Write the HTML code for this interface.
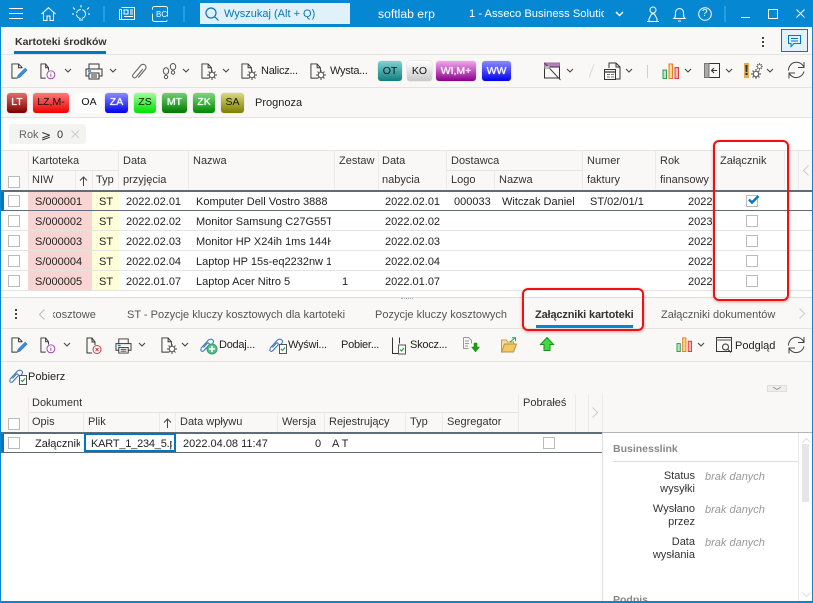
<!DOCTYPE html>
<html lang="pl"><head><meta charset="utf-8"><title>Kartoteki środków</title>
<style>
html,body{margin:0;padding:0}
body{width:813px;height:603px;overflow:hidden;position:relative;background:#fff;font-family:"Liberation Sans",sans-serif;font-size:11px;color:#222}
.a,.t,.b,svg.i{position:absolute}
.t{white-space:nowrap;line-height:14px}
.h{color:#333}
.w{color:#fff}
.e{letter-spacing:-.25px}
.b{height:20px;border-radius:3px;text-align:center;line-height:19px;font-size:10.500px;box-sizing:border-box;box-shadow:0 0 1px rgba(0,0,0,.3)}
.g{text-shadow:0 0 1px #fff}
.cb{position:absolute;width:10px;height:10px;border:1px solid #bbb;background:#fff}
.l{position:absolute;background:#e3e3e1}
.v{position:absolute;width:1px;background:#ebebe9}
svg.i{overflow:visible;fill:none;stroke:#333;stroke-width:1}
.c{overflow:hidden}
</style></head><body>
<svg width="0" height="0" style="position:absolute"><defs>
<symbol id="doc" viewBox="0 0 18 18" overflow="visible"><path d="M11 12V5L7.500 1H1v15h8M7.500 1v4H11" fill="none" stroke="#333"/></symbol>
<symbol id="chev" viewBox="0 0 8 5" overflow="visible"><path d="M1 1l3 3 3-3" fill="none" stroke="#444" stroke-width="1.100"/></symbol>
<symbol id="gear" viewBox="0 0 10 10" overflow="visible"><circle cx="5" cy="5" r="2.700" fill="#fff" stroke="#666" stroke-width="1.200"/><path d="M5 0v2M5 8v2M0 5h2M8 5h2M1.500 1.500l1.300 1.300M7.200 7.200l1.300 1.300M1.500 8.500l1.300-1.300M7.200 2.800l1.300-1.300" stroke="#666" stroke-width="1.200"/></symbol>
<symbol id="print" viewBox="0 0 18 17" overflow="visible"><path d="M4 6V1h10v5M4 13H1V6h16v7h-3M4 10h10v6H4z" fill="#f9f8f6" stroke="#333"/><path d="M3 8h3" stroke="#0288d1" stroke-width="1.500"/><path d="M6 12h6M6 14h6" stroke="#333"/></symbol>
<symbol id="ref" viewBox="0 0 18 18" overflow="visible"><path d="M.5 8.500A8 8 0 0 1 16 5.500M16 0v5.500h-6M16 9.500A8 8 0 0 1 1 11M1 16.500V11h6" fill="none" stroke="#444"/></symbol>
<symbol id="bars" viewBox="0 0 18 16" overflow="visible"><rect x="1" y="7" width="3.500" height="8.500" fill="#bfe3c6" stroke="#2a9d4a"/><rect x="7" y="1" width="3.500" height="14.500" fill="#fbd98f" stroke="#e8782a"/><rect x="13" y="4.500" width="3.500" height="11" fill="#f8b9b9" stroke="#e03a3a"/></symbol>
<symbol id="clipok" viewBox="0 0 20 18" overflow="visible"><path d="M.8 11.500L8 3.500c2.500-2.800 7-.5 5 2.500l-1 1.200M3.500 14c-2 1-3.500-.5-2.200-2M3.500 14l5.500-6c1.200-1.400-.8-2.800-2-1.500L3.500 10.500" fill="none" stroke="#3272b5" stroke-width="1"/><rect x="10.500" y="7.500" width="7" height="9" fill="#fff" stroke="#555"/><path d="M12 12l1.500 1.500 2.500-3" fill="none" stroke="#27a04a" stroke-width="1.200"/></symbol>
<symbol id="edit" viewBox="0 0 18 18" overflow="visible"><path d="M12 5L8 1H1v15h6M8 1v4h4" fill="none" stroke="#333"/><path d="M6.500 16l1-3 7.500-7.500 2 2-7.500 7.500z" fill="#3f8fd8" stroke="#2a78c0" stroke-width=".7"/></symbol>
<symbol id="info" viewBox="0 0 18 18" overflow="visible"><path d="M9 8V5L6 1H1v15h5M6 1v4h3" fill="none" stroke="#333"/><circle cx="11.500" cy="12.500" r="4.200" fill="#fff" stroke="#a83ab0"/><path d="M11.500 10v.8M11.500 11.500v3.200" stroke="#a83ab0"/></symbol>
</defs></svg>

<!-- window frame -->
<div class="a" style="left:0;top:0;width:813px;height:27px;background:#0588d1"></div>
<div class="a" style="left:0;top:27px;width:813px;height:91px;background:#f9f8f6"></div>
<div class="a" style="left:0;top:0;width:1px;height:603px;background:#0588d1;z-index:9"></div>
<div class="a" style="left:812px;top:0;width:1px;height:603px;background:#0588d1;z-index:9"></div>
<div class="a" style="left:0;top:601px;width:813px;height:2px;background:#0588d1;z-index:9"></div>

<!-- title bar -->
<svg class="i" style="left:9px;top:8px;stroke:#fff" width="15" height="11"><path d="M0 .5h14M0 5.500h14M0 10.500h14"/></svg>
<svg class="i" style="left:41px;top:7px;stroke:#fff" width="15" height="14"><path d="M.5 7L7.500.7 14.500 7M2.500 5.500v8h3.500V9h3v4.500h3.500v-8"/></svg>
<svg class="i" style="left:72px;top:5px;stroke:#fff" width="18" height="16"><circle cx="9" cy="9" r="4.500" stroke-dasharray="6 1.500"/><path d="M9 0v2.500M1 2.500l2 2M17 2.500l-2 2M0 9h2M16 9h2M7 15h4"/></svg>
<div class="a" style="left:103px;top:6px;width:2px;height:16px;background:#2a9bdb"></div>
<svg class="i" style="left:119px;top:7px;stroke:#fff" width="16" height="13"><path d="M.5 2.500h2v10M2.500.5h13v12H.5v-10M5 3h4v4H5zM11 3h3M11 5h3M11 7h3M5 9.500h9"/></svg>
<svg class="i" style="left:152px;top:6px;stroke:#fff" width="16" height="16"><rect x=".5" y=".5" width="15" height="15" rx="2" stroke-dasharray="22 4"/></svg>
<div class="t w" style="left:156px;top:9px;font-size:8px;line-height:12px">BC</div>
<div class="a" style="left:183px;top:6px;width:2px;height:16px;background:#2a9bdb"></div>
<div class="a" style="left:200px;top:3px;width:150px;height:21px;background:#e1f1fa"></div>
<svg class="i" style="left:205px;top:7px;stroke:#0277bd;stroke-width:1.200" width="14" height="14"><circle cx="6" cy="6" r="5"/><path d="M10 10l3.500 3.500"/></svg>
<div class="t" style="left:224px;top:7px;color:#0277bd;font-size:11px">Wyszukaj (Alt + Q)</div>
<div class="t w" style="left:378px;top:7px;font-size:12.200px">softlab erp</div>
<div class="t c w" style="left:469px;top:7px;width:135px;font-size:11.200px">1 - Asseco Business Solutions</div>
<svg class="i" style="left:615px;top:11px;stroke:#fff;stroke-width:1.500" width="9" height="6"><path d="M1 1l3.500 3.500L8 1"/></svg>
<svg class="i" style="left:646px;top:6px;stroke:#fff" width="14" height="16"><circle cx="7" cy="4" r="3"/><path d="M3 15.500V13l2.500-5h3L11 13v2.500z M1 15.500h12"/></svg>
<svg class="i" style="left:672px;top:6px;stroke:#fff" width="15" height="16"><path d="M2 12.500c1.500-1 1.500-3 1.500-6a4 4 0 0 1 8 0c0 3 0 5 1.500 6zM6 15h3"/></svg>
<svg class="i" style="left:698px;top:7px;stroke:#fff" width="14" height="14"><circle cx="7" cy="7" r="6.300"/></svg>
<div class="t w" style="left:702px;top:7px;font-size:10px">?</div>
<div class="a" style="left:724px;top:6px;width:2px;height:16px;background:#2a9bdb"></div>
<div class="a" style="left:741px;top:17px;width:9px;height:1px;background:#fff"></div>
<div class="a" style="left:768px;top:9px;width:8px;height:8px;border:1px solid #fff"></div>
<svg class="i" style="left:796px;top:9px;stroke:#fff" width="10" height="10"><path d="M.5.500l8 8M8.500.500l-8 8"/></svg>

<!-- tab row -->
<div class="t" style="left:15px;top:35px;font-weight:bold;font-size:10.500px;color:#333">Kartoteki środków</div>
<div class="a" style="left:14px;top:51px;width:92px;height:3px;background:#0277bd"></div>
<div class="l" style="left:1px;top:54px;width:811px;height:1px"></div>
<div class="a" style="left:762px;top:37px;width:2px;height:2px;background:#444;box-shadow:0 4px #444,0 8px #444"></div>
<div class="a" style="left:781px;top:29px;width:25px;height:21px;background:#e3f1fa;border:1px solid #0277bd"></div>
<svg class="i" style="left:788px;top:35px;stroke:#0277bd" width="13" height="13"><path d="M.5.500h12v8H6l-3 3v-3H.5zM3 3.500h7M3 6h7"/></svg>

<!-- toolbar 1 -->
<svg class="i" style="left:11px;top:63px" width="17" height="17"><use href="#edit"/></svg>
<svg class="i" style="left:40px;top:63px" width="17" height="17"><use href="#info"/></svg>
<svg class="i" style="left:64px;top:68px" width="8" height="5"><use href="#chev"/></svg>
<svg class="i" style="left:85px;top:63px" width="18" height="17"><use href="#print"/></svg>
<svg class="i" style="left:109px;top:68px" width="8" height="5"><use href="#chev"/></svg>
<svg class="i" style="left:132px;top:63px;stroke:#666;stroke-width:1.100" width="15" height="17"><path transform="rotate(40 7.500 8.500)" d="M10.500 14V3a3 3 0 0 0-6 0v12a2 2 0 0 0 4 0V4.500"/></svg>
<svg class="i" style="left:162px;top:63px;stroke:#555" width="15" height="16"><ellipse cx="4" cy="8" rx="2.700" ry="3.200"/><circle cx="4" cy="14" r="1.700"/><ellipse cx="11" cy="3.700" rx="2.700" ry="3.200"/><circle cx="11" cy="9.500" r="1.700"/></svg>
<svg class="i" style="left:182px;top:68px" width="8" height="5"><use href="#chev"/></svg>
<svg class="i" style="left:201px;top:63px" width="17" height="17"><use href="#doc"/></svg>
<svg class="i" style="left:207px;top:70px" width="10" height="10"><use href="#gear"/></svg>
<svg class="i" style="left:222px;top:68px" width="8" height="5"><use href="#chev"/></svg>
<svg class="i" style="left:241px;top:63px" width="17" height="17"><use href="#doc"/></svg>
<svg class="i" style="left:247px;top:70px" width="10" height="10"><use href="#gear"/></svg>
<div class="t e" style="left:261px;top:64px">Nalicz...</div>
<svg class="i" style="left:310px;top:63px" width="17" height="17"><use href="#doc"/></svg>
<svg class="i" style="left:316px;top:70px" width="10" height="10"><use href="#gear"/></svg>
<div class="t e" style="left:330px;top:64px">Wysta...</div>
<div class="b" style="left:378px;top:61px;width:24px;line-height:20px;background:linear-gradient(#7fd3d3,#0f7f7f);color:#111">OT</div>
<div class="b" style="left:407px;top:61px;width:25px;line-height:20px;background:linear-gradient(#fff,#c8c8c8);color:#111">KO</div>
<div class="b g" style="left:436px;top:61px;width:40px;line-height:20px;background:linear-gradient(#f3a6ef,#8a008a);color:#fff">WI,M+</div>
<div class="b g" style="left:482px;top:61px;width:29px;line-height:20px;background:linear-gradient(#8a8aff,#0000ee);color:#fff">WW</div>
<svg class="i" style="left:544px;top:62px" width="18" height="18"><rect x=".5" y="1" width="15" height="4" fill="#b77fb7" stroke="#a868a8"/><rect x=".5" y="5" width="15" height="11" fill="none" stroke="#333"/><path d="M.5 1l16 17" stroke="#444"/><rect x=".5" y="4" width="5" height="3" fill="#bbb" stroke="none"/></svg>
<svg class="i" style="left:566px;top:68px" width="8" height="5"><use href="#chev"/></svg>
<svg class="i" style="left:587px;top:64px;stroke:#d5d5d5" width="8" height="14"><path d="M7 .5l-5 13"/></svg>
<svg class="i" style="left:604px;top:62px" width="18" height="18"><path d="M5 6V1h7l4 4v12h-4M12 1v4h4" fill="none" stroke="#333"/><rect x=".5" y="7.500" width="11" height="10" fill="#f9f8f6" stroke="#333"/><path d="M1 10h10" stroke="#555" stroke-width="1.500"/><path d="M3 12.500h3M7 12.500h3M3 15h3M7 15h3" stroke="#777"/></svg>
<svg class="i" style="left:625px;top:68px" width="8" height="5"><use href="#chev"/></svg>
<div class="a" style="left:647px;top:65px;width:1px;height:13px;background:#cfcfcf"></div>
<svg class="i" style="left:662px;top:63px" width="18" height="16"><use href="#bars"/></svg>
<svg class="i" style="left:684px;top:68px" width="8" height="5"><use href="#chev"/></svg>
<svg class="i" style="left:704px;top:63px" width="16" height="15"><rect x=".5" y=".5" width="15" height="14" fill="none" stroke="#333"/><rect x=".5" y=".5" width="4.500" height="14" fill="#aaa" stroke="#777"/><path d="M13 7.500H8M10 5L7.500 7.500 10 10" stroke="#333"/></svg>
<svg class="i" style="left:725px;top:68px" width="8" height="5"><use href="#chev"/></svg>
<div class="a" style="left:744px;top:63px;width:5px;height:15px;background:#e2ad55"></div>
<div class="t" style="left:744px;top:62px;font-weight:bold;font-size:15px;line-height:17px;color:#333">!</div>
<svg class="i" style="left:751px;top:69px" width="10" height="10"><use href="#gear"/></svg>
<svg class="i" style="left:756px;top:63px" width="7" height="7"><use href="#gear"/></svg>
<svg class="i" style="left:766px;top:68px" width="8" height="5"><use href="#chev"/></svg>
<svg class="i" style="left:788px;top:62px" width="18" height="18"><use href="#ref"/></svg>
<div class="l" style="left:1px;top:87px;width:811px;height:1px"></div>

<!-- toolbar 2 -->
<div class="b g" style="left:7px;top:93px;width:20px;background:linear-gradient(#ea6a6a,#7a0000);color:#fff">LT</div>
<div class="b" style="left:33px;top:93px;width:36px;background:linear-gradient(#ff7a7a,#f00000);color:#111">LZ,M-</div>
<div class="b" style="left:75px;top:93px;width:28px;background:#fff;color:#111;box-shadow:none">OA</div>
<div class="b g" style="left:105px;top:93px;width:23px;background:linear-gradient(#8a8aff,#0000ee);color:#fff">ZA</div>
<div class="b" style="left:134px;top:93px;width:22px;background:linear-gradient(#9cff9c,#00e000);color:#111">ZS</div>
<div class="b g" style="left:162px;top:93px;width:25px;background:linear-gradient(#74cc74,#007a00);color:#fff">MT</div>
<div class="b g" style="left:193px;top:93px;width:22px;background:linear-gradient(#7ed67e,#008800);color:#fff">ZK</div>
<div class="b" style="left:221px;top:93px;width:23px;background:linear-gradient(#dada7a,#7f7f00);color:#111">SA</div>
<div class="t" style="left:255px;top:96px">Prognoza</div>
<div class="l" style="left:1px;top:117px;width:811px;height:1px"></div>

<!-- filter -->
<div class="a" style="left:9px;top:124px;width:77px;height:20px;background:#f3f3f2;border-radius:3px"></div>
<div class="t" style="left:19px;top:128px;color:#666">Rok</div>
<div class="t" style="left:41px;top:128px;font-size:12px;color:#333">⩾</div>
<div class="t" style="left:57px;top:128px;color:#333">0</div>
<svg class="i" style="left:71px;top:130px;stroke:#ccc" width="9" height="9"><path d="M.5.500l7.500 7.500M8 .5L.5 8"/></svg>

<!-- grid 1 header -->
<div class="a" style="left:1px;top:151px;width:811px;height:39px;background:#f9f8f6"></div>
<div class="l" style="left:1px;top:150px;width:811px;height:1px"></div>
<div class="l" style="left:28px;top:170px;width:91px;height:1px"></div>
<div class="l" style="left:446px;top:170px;width:136px;height:1px"></div>
<div class="v" style="left:28px;top:151px;height:39px"></div>
<div class="v" style="left:75px;top:171px;height:19px"></div>
<div class="v" style="left:92px;top:171px;height:19px"></div>
<div class="v" style="left:118px;top:151px;height:39px"></div>
<div class="v" style="left:188px;top:151px;height:39px"></div>
<div class="v" style="left:334px;top:151px;height:39px"></div>
<div class="v" style="left:378px;top:151px;height:39px"></div>
<div class="v" style="left:446px;top:151px;height:39px"></div>
<div class="v" style="left:494px;top:171px;height:19px"></div>
<div class="v" style="left:582px;top:151px;height:39px"></div>
<div class="v" style="left:655px;top:151px;height:39px"></div>
<div class="v" style="left:714px;top:151px;height:39px"></div>
<div class="v" style="left:784px;top:151px;height:39px"></div>
<div class="v" style="left:798px;top:151px;height:39px"></div>
<div class="cb" style="left:8px;top:176px"></div>
<div class="t h" style="left:32px;top:154px">Kartoteka</div>
<div class="t h" style="left:123px;top:154px">Data</div>
<div class="t h" style="left:193px;top:154px">Nazwa</div>
<div class="t h" style="left:339px;top:154px">Zestaw</div>
<div class="t h" style="left:382px;top:154px">Data</div>
<div class="t h" style="left:451px;top:154px">Dostawca</div>
<div class="t h" style="left:587px;top:154px">Numer</div>
<div class="t h" style="left:660px;top:154px">Rok</div>
<div class="t h" style="left:720px;top:154px">Załącznik</div>
<div class="t h" style="left:32px;top:173px">NIW</div>
<svg class="i" style="left:79px;top:176px;stroke:#444" width="9" height="10"><path d="M4.500 10V1M1 4.500L4.500 1 8 4.500"/></svg>
<div class="t h" style="left:96px;top:173px">Typ</div>
<div class="t h" style="left:123px;top:173px">przyjęcia</div>
<div class="t h" style="left:382px;top:173px">nabycia</div>
<div class="t h" style="left:451px;top:173px">Logo</div>
<div class="t h" style="left:499px;top:173px">Nazwa</div>
<div class="t h" style="left:587px;top:173px">faktury</div>
<div class="t h" style="left:660px;top:173px">finansowy</div>
<svg class="i" style="left:803px;top:165px;stroke:#ccc" width="6" height="11"><path d="M5.500.5L.5 5.500l5 5"/></svg>
<div class="a" style="left:1px;top:190px;width:811px;height:2px;background:#5f6e76"></div>

<!-- grid 1 rows -->
<div class="a" style="left:28px;top:192px;width:64px;height:99px;background:#f8d4d3"></div>
<div class="a" style="left:92px;top:192px;width:27px;height:99px;background:#fefed9"></div>
<div class="l" style="left:1px;top:230px;width:811px;height:1px"></div>
<div class="l" style="left:1px;top:250px;width:811px;height:1px"></div>
<div class="l" style="left:1px;top:270px;width:811px;height:1px"></div>
<div class="l" style="left:1px;top:290px;width:811px;height:1px"></div>
<div class="a" style="left:1px;top:210px;width:811px;height:1px;background:#5f6e76"></div>
<div class="a" style="left:1px;top:192px;width:3px;height:19px;background:#0277bd"></div>
<div class="cb" style="left:8px;top:195px"></div><div class="cb" style="left:8px;top:215px"></div><div class="cb" style="left:8px;top:235px"></div><div class="cb" style="left:8px;top:255px"></div><div class="cb" style="left:8px;top:275px"></div>

<div class="t" style="left:35px;top:195px">S/000001</div><div class="t" style="left:99px;top:195px">ST</div><div class="t" style="left:126px;top:195px">2022.02.01</div><div class="t c" style="left:196px;top:195px;width:135px">Komputer Dell Vostro 3888</div><div class="t" style="left:385px;top:195px">2022.02.01</div><div class="t" style="left:454px;top:195px">000033</div><div class="t" style="left:502px;top:195px">Witczak Daniel</div><div class="t" style="left:590px;top:195px">ST/02/01/1</div><div class="t" style="left:688px;top:195px">2022</div>
<div class="t" style="left:35px;top:215px">S/000002</div><div class="t" style="left:99px;top:215px">ST</div><div class="t" style="left:126px;top:215px">2022.02.02</div><div class="t c" style="left:196px;top:215px;width:135px">Monitor Samsung C27G55T</div><div class="t" style="left:385px;top:215px">2022.02.02</div><div class="t" style="left:688px;top:215px">2023</div>
<div class="t" style="left:35px;top:235px">S/000003</div><div class="t" style="left:99px;top:235px">ST</div><div class="t" style="left:126px;top:235px">2022.02.03</div><div class="t c" style="left:196px;top:235px;width:135px">Monitor HP X24ih 1ms 144Hz</div><div class="t" style="left:385px;top:235px">2022.02.03</div><div class="t" style="left:688px;top:235px">2022</div>
<div class="t" style="left:35px;top:255px">S/000004</div><div class="t" style="left:99px;top:255px">ST</div><div class="t" style="left:126px;top:255px">2022.02.04</div><div class="t c" style="left:196px;top:255px;width:135px">Laptop HP 15s-eq2232nw 15</div><div class="t" style="left:385px;top:255px">2022.02.04</div><div class="t" style="left:688px;top:255px">2022</div>
<div class="t" style="left:35px;top:275px">S/000005</div><div class="t" style="left:99px;top:275px">ST</div><div class="t" style="left:126px;top:275px">2022.01.07</div><div class="t c" style="left:196px;top:275px;width:135px">Laptop Acer Nitro 5</div><div class="t" style="left:342px;top:275px">1</div><div class="t" style="left:385px;top:275px">2022.01.07</div><div class="t" style="left:688px;top:275px">2022</div>

<div class="cb" style="left:746px;top:195px"></div><div class="cb" style="left:746px;top:215px"></div><div class="cb" style="left:746px;top:235px"></div><div class="cb" style="left:746px;top:255px"></div><div class="cb" style="left:746px;top:275px"></div>
<svg class="i" style="left:748px;top:195px;stroke:#0277bd;stroke-width:2.400" width="12" height="10"><path d="M1 4.500l3 3 6.500-6.500"/></svg>

<!-- splitter -->
<div class="a" style="left:1px;top:291px;width:811px;height:7px;background:#fff"></div>
<div class="a" style="left:1px;top:297px;width:811px;height:1px;background:#ddd"></div>

<!-- bottom panel bg -->
<div class="a" style="left:1px;top:298px;width:811px;height:135px;background:#f9f8f6"></div>
<div class="a" style="left:401px;top:298px;width:12px;height:1px;border-top:1px dotted #aaa"></div>
<div class="a" style="left:15px;top:309px;width:2px;height:2px;background:#444;box-shadow:0 4px #444,0 8px #444"></div>
<svg class="i" style="left:39px;top:309px;stroke:#bbb" width="6" height="11"><path d="M5.500.5L.5 5.500l5 5"/></svg>
<div class="a c" style="left:53px;top:308px;width:46px;height:14px"><div class="t" style="left:-3px;top:0;color:#555">kosztowe</div></div>
<div class="t" style="left:127px;top:308px;color:#555">ST - Pozycje kluczy kosztowych dla kartoteki</div>
<div class="t" style="left:375px;top:308px;color:#555">Pozycje kluczy kosztowych</div>
<div class="t" style="left:535px;top:308px;font-weight:bold;color:#333;letter-spacing:-.15px">Załączniki kartoteki</div>
<div class="a" style="left:536px;top:325px;width:97px;height:3px;background:#0288d1"></div>
<div class="t" style="left:661px;top:308px;color:#555">Załączniki dokumentów</div>
<svg class="i" style="left:799px;top:308px;stroke:#ccc" width="6" height="11"><path d="M.5.500l5 5-5 5"/></svg>
<div class="l" style="left:1px;top:328px;width:811px;height:1px"></div>

<!-- bottom toolbar -->
<svg class="i" style="left:11px;top:337px" width="17" height="17"><use href="#edit"/></svg>
<svg class="i" style="left:40px;top:337px" width="17" height="17"><use href="#info"/></svg>
<svg class="i" style="left:63px;top:342px" width="8" height="5"><use href="#chev"/></svg>
<svg class="i" style="left:86px;top:337px" width="17" height="17"><path d="M9 8V5L6 1H1v15h5M6 1v4h3" fill="none" stroke="#333"/><circle cx="11" cy="12.500" r="4" fill="#fff" stroke="#d9363e"/><path d="M9.500 11l3 3M12.500 11l-3 3" stroke="#d9363e"/></svg>
<svg class="i" style="left:115px;top:338px" width="17" height="16"><use href="#print"/></svg>
<svg class="i" style="left:138px;top:342px" width="8" height="5"><use href="#chev"/></svg>
<svg class="i" style="left:161px;top:337px" width="17" height="17"><use href="#doc"/></svg>
<svg class="i" style="left:167px;top:344px" width="10" height="10"><use href="#gear"/></svg>
<svg class="i" style="left:181px;top:342px" width="8" height="5"><use href="#chev"/></svg>
<svg class="i" style="left:200px;top:337px" width="19" height="18"><path d="M.8 11.500L8 3.500c2.500-2.800 7-.5 5 2.500l-1 1.200M3.500 14c-2 1-3.500-.5-2.200-2M3.500 14l5.500-6c1.200-1.400-.8-2.800-2-1.500L3.500 10.500" fill="none" stroke="#3272b5"/><circle cx="12" cy="12" r="5" fill="#5cbf8c" stroke="#3a9c6e"/><path d="M12 9v6M9 12h6" stroke="#fff" stroke-width="1.500"/></svg>
<div class="t e" style="left:219px;top:338px">Dodaj...</div>
<svg class="i" style="left:269px;top:337px" width="20" height="18"><use href="#clipok"/></svg>
<div class="t e" style="left:288px;top:338px">Wyświ...</div>
<div class="t e" style="left:341px;top:338px">Pobier...</div>
<svg class="i" style="left:392px;top:337px" width="16" height="18"><path d="M.5.500v16h6M7.500.5v6" fill="none" stroke="#333"/><rect x="6.500" y="8" width="7" height="9" fill="#fff" stroke="#555"/><path d="M8 12.500l1.500 1.500 2.500-3" fill="none" stroke="#27a04a" stroke-width="1.200"/></svg>
<div class="t e" style="left:410px;top:338px">Skocz...</div>
<svg class="i" style="left:463px;top:337px" width="17" height="16"><path d="M.5.500h5l3 3v3M.5.500v11h5M2 4h4M2 6.500h4M2 9h3" fill="none" stroke="#999"/><path d="M11 6h3v4h2.500l-4 5-4-5H11z" fill="#16a016" stroke="#0a8a0a" stroke-width=".5"/></svg>
<svg class="i" style="left:501px;top:337px" width="17" height="17"><path d="M.5 15V3h5l1 2h6v2" fill="#f7dc9a" stroke="#c2a050"/><path d="M.5 15l3-8h12l-3 8z" fill="#f2c766" stroke="#b8923c"/><path d="M9 5l5-4M11 .8h3.500v3.500" fill="none" stroke="#2fa04a"/></svg>
<svg class="i" style="left:540px;top:337px" width="14" height="14"><path d="M7 .5l6.500 7H10v6H4v-6H.5z" fill="#46d646" stroke="#0c9a0c"/></svg>
<svg class="i" style="left:676px;top:337px" width="17" height="15"><use href="#bars"/></svg>
<svg class="i" style="left:697px;top:342px" width="8" height="5"><use href="#chev"/></svg>
<svg class="i" style="left:716px;top:337px" width="17" height="17"><rect x=".5" y=".5" width="15" height="14" fill="none" stroke="#333"/><path d="M.5 3h15" stroke="#888" stroke-width="1.500"/><circle cx="9.500" cy="10" r="3" fill="#f9f8f6" stroke="#333"/><path d="M12 12.500l3 3" stroke="#333"/></svg>
<div class="t" style="left:735px;top:339px">Podgląd</div>
<svg class="i" style="left:788px;top:337px" width="18" height="18"><use href="#ref"/></svg>
<div class="l" style="left:1px;top:361px;width:811px;height:1px"></div>
<svg class="i" style="left:9px;top:368px" width="20" height="18"><use href="#clipok"/></svg>
<div class="t" style="left:28px;top:370px">Pobierz</div>
<svg class="i" style="left:767px;top:385px" width="20" height="7"><rect x=".5" y=".5" width="19" height="6" fill="#eee" stroke="#ddd"/><path d="M6 2l4 2.500L14 2" stroke="#999"/></svg>

<!-- grid 2 header -->
<div class="l" style="left:28px;top:412px;width:490px;height:1px"></div>
<div class="v" style="left:28px;top:397px;height:35px"></div>
<div class="v" style="left:83px;top:413px;height:19px"></div>
<div class="v" style="left:159px;top:413px;height:19px"></div>
<div class="v" style="left:175px;top:413px;height:19px"></div>
<div class="v" style="left:277px;top:413px;height:19px"></div>
<div class="v" style="left:324px;top:413px;height:19px"></div>
<div class="v" style="left:405px;top:413px;height:19px"></div>
<div class="v" style="left:442px;top:413px;height:19px"></div>
<div class="v" style="left:518px;top:394px;height:38px"></div>
<div class="v" style="left:575px;top:394px;height:38px"></div>
<div class="v" style="left:588px;top:394px;height:38px"></div>
<div class="v" style="left:602px;top:393px;height:39px"></div>
<div class="cb" style="left:8px;top:418px"></div>
<div class="t h" style="left:32px;top:396px">Dokument</div>
<div class="t h" style="left:523px;top:396px">Pobrałeś</div>
<div class="t h" style="left:32px;top:415px">Opis</div>
<div class="t h" style="left:88px;top:415px">Plik</div>
<svg class="i" style="left:163px;top:418px;stroke:#444" width="9" height="10"><path d="M4.500 10V1M1 4.500L4.500 1 8 4.500"/></svg>
<div class="t h" style="left:180px;top:415px">Data wpływu</div>
<div class="t h" style="left:282px;top:415px">Wersja</div>
<div class="t h" style="left:329px;top:415px">Rejestrujący</div>
<div class="t h" style="left:410px;top:415px">Typ</div>
<div class="t h" style="left:447px;top:415px">Segregator</div>
<svg class="i" style="left:592px;top:407px;stroke:#ccc" width="6" height="11"><path d="M.5.500l5 5-5 5"/></svg>

<!-- grid 2 row -->
<div class="a" style="left:1px;top:432px;width:601px;height:2px;background:#5f6e76"></div>
<div class="a" style="left:602px;top:432px;width:210px;height:1px;background:#b5b5b5"></div>
<div class="a" style="left:1px;top:452px;width:601px;height:1px;background:#5f6e76"></div>
<div class="a" style="left:1px;top:434px;width:3px;height:18px;background:#0277bd"></div>
<div class="cb" style="left:8px;top:437px"></div>
<div class="t c" style="left:35px;top:437px;width:45px">Załącznik</div>
<div class="a" style="left:84px;top:433px;width:88px;height:15px;border:2px solid #0277bd;background:#fff"></div>
<div class="t c" style="left:91px;top:437px;width:81px;letter-spacing:-.2px">KART_1_234_5.pdf</div>
<div class="t" style="left:183px;top:437px">2022.04.08 11:47</div>
<div class="t" style="left:315px;top:437px">0</div>
<div class="t" style="left:332px;top:437px">A T</div>
<div class="cb" style="left:543px;top:437px"></div>

<!-- right panel -->
<div class="a" style="left:602px;top:433px;width:1px;height:168px;background:#ddd"></div>
<div class="t" style="left:613px;top:442px;font-weight:bold;font-size:10.500px;color:#888">Businesslink</div>
<div class="a" style="left:613px;top:461px;width:185px;height:1px;background:#ddd"></div>
<div class="a" style="left:798px;top:433px;width:1px;height:168px;background:#e8e8e8"></div>
<svg class="i" style="left:802px;top:438px;stroke:#ddd" width="9" height="5"><path d="M.5 4.500L4.500.5l4 4"/></svg>
<div class="a" style="left:802px;top:444px;width:7px;height:58px;background:#e6e6e6"></div>
<svg class="i" style="left:802px;top:592px;stroke:#ddd" width="9" height="5"><path d="M.5.500l4 4 4-4"/></svg>
<div class="t" style="left:640px;top:470px;width:55px;text-align:right;line-height:13.300px;white-space:normal;color:#333">Status wysyłki</div>
<div class="t" style="left:640px;top:503px;width:55px;text-align:right;line-height:13.300px;white-space:normal;color:#333">Wysłano przez</div>
<div class="t" style="left:640px;top:536px;width:55px;text-align:right;line-height:13.300px;white-space:normal;color:#333">Data wysłania</div>
<div class="t" style="left:705px;top:470px;font-style:italic;color:#999">brak danych</div>
<div class="t" style="left:705px;top:503px;font-style:italic;color:#999">brak danych</div>
<div class="t" style="left:705px;top:536px;font-style:italic;color:#999">brak danych</div>
<div class="a c" style="left:613px;top:593px;width:50px;height:8px"><div class="t" style="left:0;top:0;font-weight:bold;font-size:10.500px;color:#888">Podpis</div></div>

<!-- red highlights -->
<div class="a" style="left:713px;top:140px;width:76px;height:161px;box-sizing:border-box;border:2px solid #f01010;border-radius:6px;box-shadow:0 1px 3px rgba(200,0,0,.35)"></div>
<div class="a" style="left:522px;top:288px;width:122px;height:43px;box-sizing:border-box;border:2px solid #f01010;border-radius:6px;box-shadow:0 1px 3px rgba(200,0,0,.35)"></div>
</body></html>
